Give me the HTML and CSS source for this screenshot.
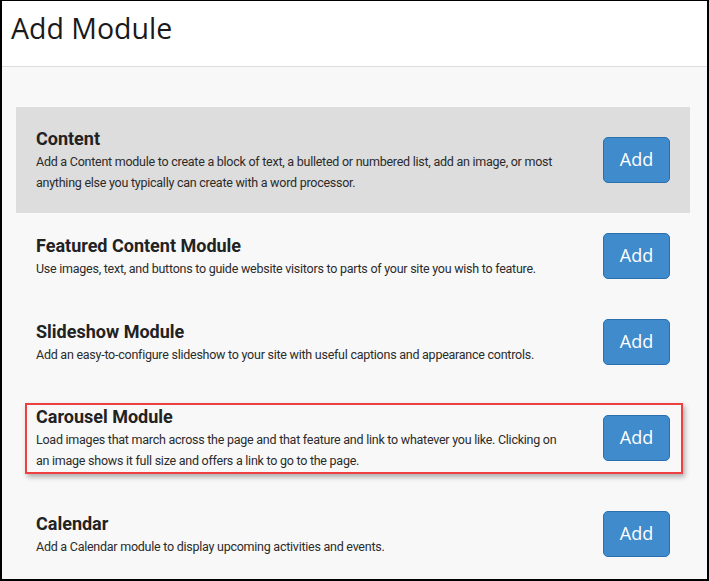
FILE: index.html
```html
<!DOCTYPE html>
<html lang="en">
<head>
  <meta charset="UTF-8" />
  <meta name="viewport" content="width=device-width, initial-scale=1.0"/>
  <title>Add Module</title>
  <link rel="stylesheet" href="styles.css">
</head>
<body>

<div class="window">
  <div class="header">
    <h1>Add Module</h1>
  </div>

  <div class="modules">
    <div class="module selected">
      <div class="info">
        <h2>Content</h2>
        <p>Add a Content module to create a block of text, a bulleted or numbered list, add an image, or most anything else you typically can create with a word processor.</p>
      </div>
      <button class="add">Add</button>
    </div>

    <div class="module">
      <div class="info">
        <h2>Featured Content Module</h2>
        <p>Use images, text, and buttons to guide website visitors to parts of your site you wish to feature.</p>
      </div>
      <button class="add">Add</button>
    </div>

    <div class="module">
      <div class="info">
        <h2>Slideshow Module</h2>
        <p>Add an easy-to-configure slideshow to your site with useful captions and appearance controls.</p>
      </div>
      <button class="add">Add</button>
    </div>

    <div class="module highlighted">
      <div class="info">
        <h2>Carousel Module</h2>
        <p>Load images that march across the page and that feature and link to whatever you like. Clicking on an image shows it full size and offers a link to go to the page.</p>
      </div>
      <button class="add">Add</button>
    </div>

    <div class="module">
      <div class="info">
        <h2>Calendar</h2>
        <p>Add a Calendar module to display upcoming activities and events.</p>
      </div>
      <button class="add">Add</button>
    </div>
  </div>
</div>

</body>
</html>
```

FILE: styles.css
```css
html, body {
  margin: 0;
  height: 100%;
}
body {
  font-family: Roboto, "Liberation Sans", sans-serif;
  background: #f8f8f8;
}
.window {
  box-sizing: border-box;
  height: 100vh;
  border: 2px solid #000;
  border-top-width: 1px;
  background: #f8f8f8;
  overflow: hidden;
}
.header {
  height: 65px;
  background: #fff;
  border-bottom: 1px solid #dcdcdc;
  padding-left: 9px;
}
.header h1 {
  margin: 0;
  padding-top: 8px;
  font-family: "Open Sans", "Noto Sans", sans-serif;
  font-weight: 400;
  font-size: 28.5px;
  line-height: 38px;
  color: #1a1a1a;
}
.modules {
  padding: 40px 17px 0 14px;
}
.module {
  position: relative;
  display: flex;
  align-items: center;
  padding: 20px 20px 20px 20px;
}
.module.selected {
  background: #dddddd;
}
.info {
  flex: 1;
}
.info h2 {
  margin: 0;
  font-size: 18px;
  font-weight: 700;
  line-height: 24px;
  color: #222;
}
.info p {
  margin: 0;
  max-width: 530px;
  font-size: 12.5px;
  letter-spacing: -0.25px;
  line-height: 21px;
  color: #2b2b2b;
}
.add {
  width: 67px;
  height: 46px;
  margin-left: 16px;
  padding: 0 0 3px;
  background: #3f8bcc;
  border: 1px solid #2b6fb1;
  border-radius: 5px;
  color: #fff;
  font-family: "Open Sans", "Noto Sans", sans-serif;
  font-size: 18px;
  cursor: pointer;
}
.add:hover {
  background: #367fbe;
}
/* red callout round the carousel row */
.module.highlighted::after {
  content: "";
  position: absolute;
  left: 9px;
  right: 7px;
  top: 18px;
  bottom: 17px;
  border: 2px solid #ee4040;
  box-shadow: 2px 3px 5px rgba(0,0,0,0.3);
  pointer-events: none;
}
```
